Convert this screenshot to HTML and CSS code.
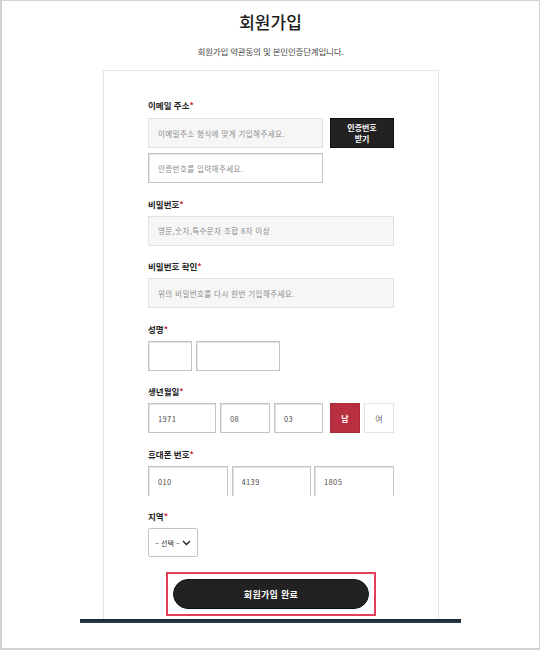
FILE: index.html
```html
<!DOCTYPE html>
<html lang="ko">
<head>
<meta charset="utf-8">
<title>회원가입</title>
<link rel="stylesheet" href="styles.css">
</head>
<body>
<div class="frame">
  <h1 class="title">회원가입</h1>
  <p class="subtitle">회원가입 약관동의 및 본인인증단계입니다.</p>
  <div class="card">
    <div class="group group-first">
      <div class="label">이메일 주소<span class="req">*</span></div>
      <div class="row">
        <input class="field filled w-email" type="text" placeholder="이메일주소 형식에 맞게 기입해주세요.">
        <button class="btn-code" type="button">인증번호<br>받기</button>
      </div>
      <div class="row row-next">
        <input class="field plain w-email" type="text" placeholder="인증번호를 입력해주세요.">
      </div>
    </div>
    <div class="group">
      <div class="label">비밀번호<span class="req">*</span></div>
      <input class="field filled w-full" type="password" placeholder="영문,숫자,특수문자 조합 8자 이상">
    </div>
    <div class="group">
      <div class="label">비밀번호 확인<span class="req">*</span></div>
      <input class="field filled w-full" type="password" placeholder="위의 비밀번호를 다시 한번 기입해주세요.">
    </div>
    <div class="group">
      <div class="label">성명<span class="req">*</span></div>
      <div class="row row-tight">
        <input class="field plain w-last" type="text">
        <input class="field plain w-first" type="text">
      </div>
    </div>
    <div class="group">
      <div class="label">생년월일<span class="req">*</span></div>
      <div class="row row-tight">
        <input class="field plain w-year" type="text" value="1971">
        <input class="field plain w-month" type="text" value="08">
        <input class="field plain w-day" type="text" value="03">
        <div class="gender">
          <button class="g-btn g-on" type="button">남</button>
          <button class="g-btn" type="button">여</button>
        </div>
      </div>
    </div>
    <div class="group">
      <div class="label">휴대폰 번호<span class="req">*</span></div>
      <div class="phone">
        <input class="field plain open" type="text" value="010">
        <input class="field plain open" type="text" value="4139">
        <input class="field plain open" type="text" value="1805">
      </div>
    </div>
    <div class="group">
      <div class="label">지역<span class="req">*</span></div>
      <div class="select">
        <span>– 선택 –</span>
        <svg class="chev" width="9" height="6" viewBox="0 0 9 6"><path d="M1 1 L4.5 4.5 L8 1" fill="none" stroke="#222" stroke-width="1.4"/></svg>
      </div>
    </div>
    <div class="submit-wrap">
      <button class="submit" type="button">회원가입 완료</button>
    </div>
  </div>
  <div class="footline"></div>
</div>
</body>
</html>
```
FILE: styles.css
```css
* { box-sizing: border-box; }
html, body { margin: 0; padding: 0; background: #fff; }
body {
  font-family: "Noto Sans CJK KR", "Noto Sans", sans-serif;
  color: #222;
}
.frame {
  width: 540px;
  height: 650px;
  border: 1px solid #d2d2d2;
  border-left-width: 2px;
  border-bottom-width: 2px;
  overflow: hidden;
}
.title {
  margin: 9px 0 0;
  text-align: center;
  font-size: 17px;
  line-height: 24px;
  font-weight: 500;
  color: #1e1e1e;
}
.subtitle {
  margin: 11px 0 0;
  text-align: center;
  font-size: 8.5px;
  line-height: 12px;
  color: #4a4a4a;
  letter-spacing: -0.2px;
}
.card {
  margin: 13px 0 0 101px;
  width: 336px;
  border: 1px solid #e6e6e6;
  border-bottom: 0;
  padding: 28px 44px 3px;
}
.group { margin-top: 14.5px; }
.group-first { margin-top: 0; margin-bottom: 3px; }
.label {
  font-size: 8.5px;
  line-height: 12px;
  font-weight: 700;
  color: #222;
  margin-bottom: 6px;
}
.group-first .label { margin-bottom: 7px; }
.req { color: #c9253a; }
.row { display: flex; gap: 7px; }
.row-next { margin-top: 5px; }
.row-tight { gap: 4px; }
.field {
  display: block;
  height: 30px;
  padding: 0 0 0 9px;
  font-family: inherit;
  font-size: 7.5px;
  letter-spacing: 0.4px;
  color: #4a4a4a;
  outline: none;
  margin: 0;
}
.field::placeholder { color: #8c8c8c; }
.filled { background: #f6f6f6; border: 1px solid #e2e2e2; }
.plain {
  background: #fff;
  border: 1px solid #c4c4c4;
  box-shadow: inset 1px 1px 0 #e4e4e4;
}
.open { border-bottom: 0; }
.w-email { width: 175px; }
.w-full { width: 246px; }
.w-last { width: 44px; }
.w-first { width: 84px; }
.w-year { width: 68px; }
.w-month { width: 50px; }
.w-day { width: 49px; }
.btn-code {
  width: 64px;
  height: 30px;
  background: #222;
  border: 1px solid #111;
  color: #fff;
  font-family: inherit;
  font-size: 8px;
  font-weight: 700;
  line-height: 11px;
  padding: 0;
}
.gender { display: flex; gap: 4px; margin-left: 3px; }
.g-btn {
  width: 30px;
  height: 30px;
  padding: 0;
  background: #fff;
  border: 1px solid #e3e3e3;
  color: #666;
  font-family: inherit;
  font-size: 8px;
}
.g-on { background: #b8303f; border-color: #a92a38; color: #fff; font-weight: 700; }
.phone {
  display: grid;
  grid-template-columns: 80px 79px 80px;
  column-gap: 3.5px;
  height: 30px;
}
.phone .field { width: 100%; }
.select {
  width: 50px;
  height: 29px;
  border: 1px solid #c4c4c4;
  border-radius: 2px;
  display: flex;
  align-items: center;
  justify-content: center;
  gap: 2px;
  font-size: 7px;
  color: #333;
}
.chev { display: block; }
.submit-wrap {
  margin: 15px auto 0;
  width: 210px;
  border: 2px solid #e2405a;
  padding: 5px;
}
.submit {
  display: block;
  width: 100%;
  height: 30px;
  border-radius: 15px;
  background: #222;
  border: 1px solid #111;
  color: #fff;
  font-family: inherit;
  font-size: 9px;
  font-weight: 700;
  letter-spacing: 0.3px;
  padding: 0;
}
.footline {
  margin: 0 78px 0 78px;
  height: 4px;
  background: linear-gradient(#1b2733, #2e3f4d);
}
```
